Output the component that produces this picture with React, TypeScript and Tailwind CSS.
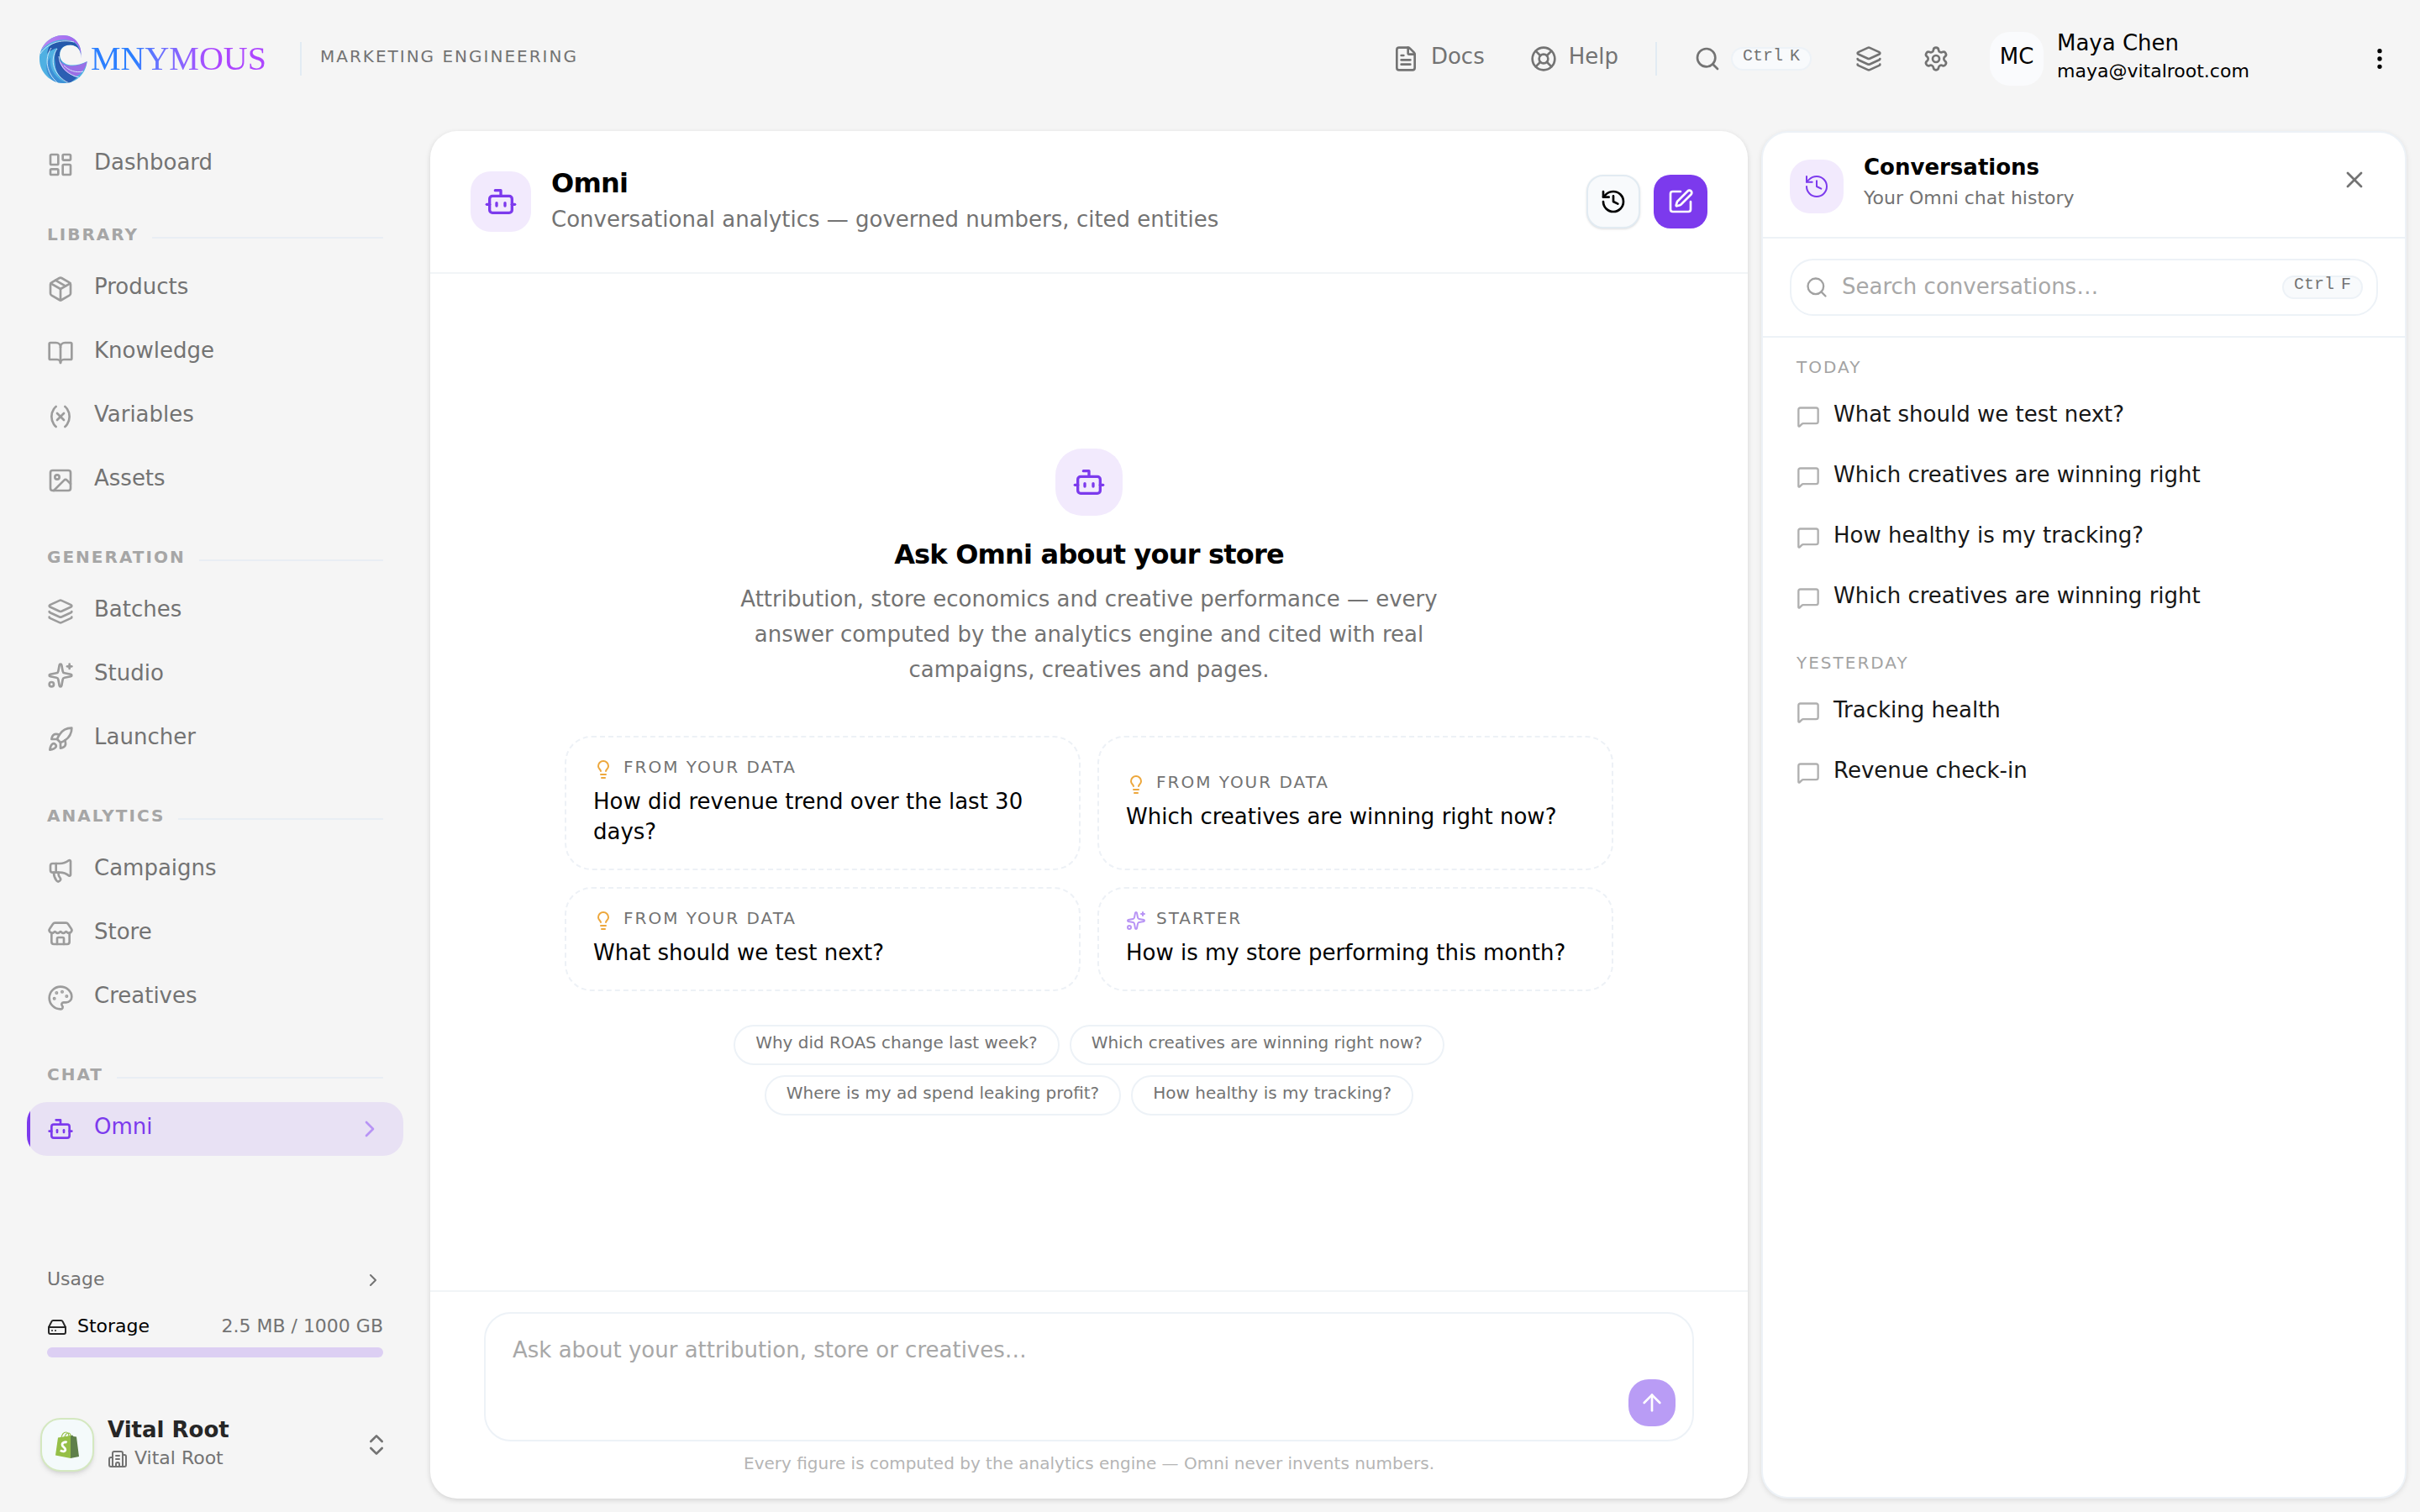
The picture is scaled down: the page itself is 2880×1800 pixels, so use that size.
import type { ReactNode } from 'react';
import {
  ArrowUp,
  BookOpen,
  Bot,
  Building2,
  ChevronRight,
  ChevronsUpDown,
  EllipsisVertical,
  FileText,
  HardDrive,
  History,
  Image,
  Layers,
  LayoutDashboard,
  LifeBuoy,
  Lightbulb,
  Megaphone,
  MessageSquare,
  Package,
  Palette,
  Rocket,
  Search,
  Settings,
  Sparkles,
  SquarePen,
  Store,
  Variable,
  X,
} from 'lucide-react';
import type { LucideIcon } from 'lucide-react';
import clsx from 'clsx';

type NavItem = { label: string; icon: LucideIcon; active?: boolean };

const sections: { title: string; items: NavItem[] }[] = [
  {
    title: 'LIBRARY',
    items: [
      { label: 'Products', icon: Package },
      { label: 'Knowledge', icon: BookOpen },
      { label: 'Variables', icon: Variable },
      { label: 'Assets', icon: Image },
    ],
  },
  {
    title: 'GENERATION',
    items: [
      { label: 'Batches', icon: Layers },
      { label: 'Studio', icon: Sparkles },
      { label: 'Launcher', icon: Rocket },
    ],
  },
  {
    title: 'ANALYTICS',
    items: [
      { label: 'Campaigns', icon: Megaphone },
      { label: 'Store', icon: Store },
      { label: 'Creatives', icon: Palette },
    ],
  },
  { title: 'CHAT', items: [{ label: 'Omni', icon: Bot, active: true }] },
];

const suggestions = [
  { kind: 'data', text: 'How did revenue trend over the last 30 days?' },
  { kind: 'data', text: 'Which creatives are winning right now?' },
  { kind: 'data', text: 'What should we test next?' },
  { kind: 'starter', text: 'How is my store performing this month?' },
];

const quickAsks = [
  'Why did ROAS change last week?',
  'Which creatives are winning right now?',
  'Where is my ad spend leaking profit?',
  'How healthy is my tracking?',
];

const history = [
  {
    day: 'TODAY',
    chats: [
      'What should we test next?',
      'Which creatives are winning right',
      'How healthy is my tracking?',
      'Which creatives are winning right',
    ],
  },
  { day: 'YESTERDAY', chats: ['Tracking health', 'Revenue check-in'] },
];

function LogoMark() {
  return (
    <svg viewBox="0 0 60 60" className="size-15" aria-hidden="true">
      <defs>
        <clipPath id="wave">
          <path d="M50 29.5C51.500 20 46 14 38.500 13.500C29 13 24 20 25.500 28C28 38 42 41 57.700 33C56 48 45 59 30 59C14 59 1 46 1 30.500C1 14 14 2 29 2C42 2 53 13 50 29.500Z" />
        </clipPath>
        <linearGradient id="crest" x1="0" y1="0" x2="1" y2="0">
          <stop offset="0" stopColor="#b98af0" />
          <stop offset="1" stopColor="#9a5cf0" />
        </linearGradient>
      </defs>
      <g clipPath="url(#wave)">
        <rect width="60" height="60" fill="#4fb0e2" />
        <path d="M0 24C8 10 26 4 40 9C48 12 50 20 50 30L60 26V0H0Z" fill="url(#crest)" />
        <path d="M12 16C20 8 36 5 44 12C48 16 50 22 50 28C47 17 42 14 36 14C28 14 24 20 25 28C26 36 34 42 44 46L38 56C24 50 14 34 22 17C18 18 14 20 10 24Z" fill="#2559ab" />
        <path d="M24 31C30 40 44 41 58 33C56 40 52 48 44 51C34 48 26 42 24 31Z" fill="#9a6fe6" />
        <path d="M22 26C22 40 34 50 46 52L36 60C22 52 16 38 22 26Z" fill="#2c5fb3" />
        <path d="M14 28C12 42 20 54 34 59L22 60C8 50 6 38 14 28Z" fill="#3d8fd6" />
        <g fill="none" stroke="#d9ecfb" strokeWidth="0.9">
          <path d="M2 24C10 12 26 6 42 10" />
          <path d="M22 18C12 32 18 50 36 59" />
          <path d="M15 17C6 30 10 48 22 58" />
          <path d="M24 27C25 40 36 50 48 52" />
          <path d="M30 38C36 44 44 47 53 45" />
        </g>
      </g>
    </svg>
  );
}

function ShopBag() {
  return (
    <svg viewBox="0 0 28 32" className="h-8 w-7" aria-hidden="true">
      <path d="M3 7.500L18 5V32L0 28.500Z" fill="#95bf47" />
      <path d="M18 5L20 4.600L21.500 6L25 6.500L28 30L18 32Z" fill="#5e7f4a" />
      <path d="M6.500 9C7.500 4 10 1 12.500 1C15 1 16 4 16 7M10.500 8C11.500 4 13.500 2 15.500 2C17 2 18 4 18 6" fill="none" stroke="#95bf47" strokeWidth="1.200" />
      <path d="M13.600 13.200C12 12.300 8 12.800 8 15.900C8 18.800 11.800 19 11.800 21.800C11.800 24 8.600 24.600 5.800 22.600" fill="none" stroke="#fff" strokeWidth="2.800" />
    </svg>
  );
}

function Kbd({ letter }: { letter: string }) {
  return (
    <kbd className="flex h-7 items-start gap-2 rounded-full border-2 border-[#edf2f7] bg-slate-50 px-3 font-['Liberation_Mono',monospace] text-[20px] leading-[18px] text-neutral-500">
      <span>Ctrl</span>
      <span>{letter}</span>
    </kbd>
  );
}

function IconTile({ className, children }: { className?: string; children: ReactNode }) {
  return (
    <div className={clsx('flex shrink-0 items-center justify-center bg-[#f2eafd] text-[#7c3aed]', className)}>
      {children}
    </div>
  );
}

function NavLink({ item }: { item: NavItem }) {
  const Icon = item.icon;
  return (
    <a
      href="#"
      className={clsx(
        'relative flex h-16 items-center gap-6 overflow-hidden rounded-3xl px-6 text-[26px]',
        item.active ? 'bg-[#e8e1f4] text-[#7c3aed]' : 'text-neutral-500',
      )}
    >
      {item.active && <span className="absolute inset-y-0 left-0 w-1 bg-[#7c3aed]" />}
      <Icon size={32} className={item.active ? '' : 'text-[#9c9c9c]'} />
      <span className="flex-1 pb-1.5">{item.label}</span>
      {item.active && <ChevronRight size={32} className="text-[#b894f5]" />}
    </a>
  );
}

function TopBar() {
  return (
    <header className="flex h-35 shrink-0 items-center pr-8 pl-11.5 text-[26px] text-neutral-500">
      <div className="flex items-center gap-0.5">
        <LogoMark />
        <span className="bg-linear-to-r from-blue-500 from-25% to-purple-500 to-70% bg-clip-text font-['Liberation_Serif',serif] text-[40px] leading-12 text-transparent">
          MNYMOUS
        </span>
      </div>
      <div className="ml-10 h-10 w-0.5 bg-[#e2ebf3]" />
      <span className="ml-5.5 pb-1.5 text-[20px] tracking-widest">MARKETING ENGINEERING</span>

      <nav className="ml-auto flex items-center">
        <a href="#" className="flex items-center gap-3.5">
          <FileText size={32} />
          <span className="pb-1.5">Docs</span>
        </a>
        <a href="#" className="ml-13.5 flex items-center gap-3.5">
          <LifeBuoy size={32} />
          <span className="pb-1.5">Help</span>
        </a>
      </nav>
      <div className="ml-11 h-10 w-0.5 bg-[#e2ebf3]" />
      <button type="button" aria-label="Search" className="ml-11 flex items-center gap-3">
        <Search size={32} />
        <Kbd letter="K" />
      </button>
      <button type="button" aria-label="Batches" className="ml-9 flex size-16 items-center justify-center">
        <Layers size={32} />
      </button>
      <button type="button" aria-label="Settings" className="ml-4 flex size-16 items-center justify-center">
        <Settings size={32} />
      </button>
      <div className="ml-8 flex w-112 items-center gap-4 text-black">
        <div className="flex size-16 items-center justify-center rounded-3xl bg-[#fafbfd]">
          <span className="pb-1.5">MC</span>
        </div>
        <div className="pb-1">
          <p className="leading-8">Maya Chen</p>
          <p className="mt-0.5 text-[22px] leading-8">maya@vitalroot.com</p>
        </div>
      </div>
      <button type="button" aria-label="Account menu" className="text-black">
        <EllipsisVertical size={32} />
      </button>
    </header>
  );
}

function Sidebar() {
  return (
    <aside className="flex w-128 shrink-0 flex-col px-8 pt-6 pb-12">
      <nav>
        <NavLink item={{ label: 'Dashboard', icon: LayoutDashboard }} />
        {sections.map((section, i) => (
          <section key={section.title} className={i === 0 ? 'mt-9' : 'mt-11'}>
            <div className="mb-2.5 flex h-9.5 items-center gap-4 px-6">
              <h2 className="pb-2 text-[20px] font-bold tracking-widest text-[#a6a6a6]">{section.title}</h2>
              <div className="h-0.5 flex-1 bg-[#e9eef4]" />
            </div>
            <div className="flex flex-col gap-3">
              {section.items.map((item) => (
                <NavLink key={item.label} item={item} />
              ))}
            </div>
          </section>
        ))}
      </nav>

      <div className="mt-auto px-6 text-[22px] leading-7 text-neutral-500">
        <a href="#" className="flex h-8 items-center justify-between">
          <span className="pb-0.5">Usage</span>
          <ChevronRight size={24} />
        </a>
        <div className="mt-6 flex h-8 items-center gap-3 text-black">
          <HardDrive size={24} className="text-neutral-800" />
          <span className="flex-1 pb-0.5">Storage</span>
          <span className="pb-0.5 text-neutral-500">2.5 MB / 1000 GB</span>
        </div>
        <div className="mt-2 h-3 rounded-full bg-[#dccff3]" />
      </div>

      <button type="button" className="mt-18 flex items-center gap-4 px-4 text-left">
        <div className="flex size-16 items-center justify-center rounded-3xl border-2 border-[#d4e8c0] bg-[#f4fafb] shadow-md">
          <ShopBag />
        </div>
        <div className="flex-1">
          <p className="pb-1.5 text-[26px] leading-7 font-bold text-neutral-800">Vital Root</p>
          <p className="flex items-center gap-2 text-[22px] leading-7 text-neutral-500">
            <Building2 size={24} />
            <span className="pb-0.5">Vital Root</span>
          </p>
        </div>
        <ChevronsUpDown size={32} className="text-neutral-500" />
      </button>
    </aside>
  );
}

function ChatPanel() {
  return (
    <main className="flex min-w-0 flex-1 flex-col rounded-4xl bg-white shadow-[0_2px_6px_rgba(0,0,0,0.14)]">
      <div className="flex items-center gap-6 border-b-2 border-[#f1f5f7] px-12 py-[42px]">
        <IconTile className="size-18 rounded-3xl">
          <Bot size={40} />
        </IconTile>
        <div className="flex-1 pb-0.5">
          <h1 className="text-[32px] leading-10 font-bold tracking-tight text-black">Omni</h1>
          <p className="mt-1 text-[26px] leading-[38px] text-neutral-500">
            Conversational analytics — governed numbers, cited entities
          </p>
        </div>
        <div className="flex gap-4">
          <button
            type="button"
            aria-label="History"
            className="flex size-16 items-center justify-center rounded-[20px] border-2 border-[#e2ebf2] bg-slate-50 text-black shadow-sm"
          >
            <History size={32} />
          </button>
          <button
            type="button"
            aria-label="New conversation"
            className="flex size-16 items-center justify-center rounded-[20px] bg-[#7c3aed] text-white"
          >
            <SquarePen size={32} />
          </button>
        </div>
      </div>

      <div className="flex flex-1 flex-col items-center justify-center px-40">
        <IconTile className="size-20 rounded-4xl">
          <Bot size={40} />
        </IconTile>
        <h2 className="mt-6.5 text-[32px] leading-10 font-bold tracking-tight text-black">Ask Omni about your store</h2>
        <p className="mt-3 max-w-4xl text-center text-[26px] leading-[42px] text-neutral-500">
          Attribution, store economics and creative performance — every answer computed by the analytics engine and
          cited with real campaigns, creatives and pages.
        </p>

        <div className="mt-[58px] grid w-full grid-cols-2 gap-5">
          {suggestions.map((s) => (
            <button
              key={s.text}
              type="button"
              className="flex flex-col justify-center rounded-4xl border-2 border-dashed border-[#edf1f6] px-8 py-6.5 text-left"
            >
              <span className="flex h-6 items-center gap-3 text-[20px] tracking-widest text-neutral-500">
                {s.kind === 'data' ? (
                  <Lightbulb size={24} className="text-[#eda73c]" />
                ) : (
                  <Sparkles size={24} className="text-[#b894f5]" />
                )}
                <span className="pb-1.5">{s.kind === 'data' ? 'FROM YOUR DATA' : 'STARTER'}</span>
              </span>
              <span className="mt-2 text-[26px] leading-9 text-black">{s.text}</span>
            </button>
          ))}
        </div>

        <div className="mt-10 flex flex-wrap justify-center gap-3">
          {quickAsks.map((q) => (
            <button
              key={q}
              type="button"
              className="flex h-12 items-center rounded-full border-2 border-[#edf2f7] px-6 text-[20px] text-neutral-500"
            >
              <span className="pb-1.5">{q}</span>
            </button>
          ))}
        </div>
      </div>

      <form className="border-t-2 border-[#f1f5f7] px-16 pt-6 pb-6">
        <div className="flex items-end rounded-4xl border-2 border-[#edf2f7] pr-5 pb-4 pl-8">
          <textarea
            aria-label="Message Omni"
            placeholder="Ask about your attribution, store or creatives…"
            className="h-33.5 flex-1 resize-none pt-6 text-[26px] leading-[38px] text-black outline-none placeholder:text-[#a8a8a8]"
          />
          <button
            type="submit"
            aria-label="Send"
            className="flex size-14 items-center justify-center rounded-3xl bg-[#b99cf5] text-white"
          >
            <ArrowUp size={32} />
          </button>
        </div>
        <p className="mt-3 pb-1 text-center text-[20px] leading-7 text-[#b5b5b5]">
          Every figure is computed by the analytics engine — Omni never invents numbers.
        </p>
      </form>
    </main>
  );
}

function ConversationsPanel() {
  return (
    <aside className="flex w-3xl shrink-0 flex-col rounded-4xl border-2 border-[#edf2f7] bg-white shadow-[0_2px_6px_rgba(0,0,0,0.1)]">
      <div className="flex items-start border-b-2 border-[#edf2f7] px-8 pt-6 pb-6.5">
        <IconTile className="mt-2 size-16 rounded-3xl">
          <History size={32} strokeWidth={1.5} />
        </IconTile>
        <div className="ml-6 flex-1">
          <h2 className="text-[26px] leading-[34px] font-bold text-black">Conversations</h2>
          <p className="text-[22px] leading-10 text-neutral-500">Your Omni chat history</p>
        </div>
        <button type="button" aria-label="Close" className="mt-4 mr-3 text-neutral-500">
          <X size={32} />
        </button>
      </div>

      <div className="border-b-2 border-[#edf2f7] px-8 py-6">
        <label className="flex h-17 items-center rounded-[28px] border-2 border-[#edf2f7] px-4">
          <Search size={28} className="text-neutral-400" />
          <input
            type="text"
            aria-label="Search conversations"
            placeholder="Search conversations…"
            className="ml-4 min-w-0 flex-1 pb-0.5 text-[26px] text-black outline-none placeholder:text-[#a8a8a8]"
          />
          <Kbd letter="F" />
        </label>
      </div>

      <div className="flex flex-col gap-6 px-10 pt-4.5">
        {history.map((group) => (
          <section key={group.day}>
            <h3 className="flex h-10 items-center pb-1.5 text-[20px] tracking-widest text-[#a3a3a3]">{group.day}</h3>
            {group.chats.map((chat, i) => (
              <a key={i} href="#" className="flex h-18 items-center gap-4 text-[26px] text-neutral-900">
                <MessageSquare size={28} className="text-[#b0b0b0]" />
                <span className="pb-1.5">{chat}</span>
              </a>
            ))}
          </section>
        ))}
      </div>
    </aside>
  );
}

export default function App() {
  return (
    <div className="flex h-screen flex-col bg-[#f5f5f5] font-['DejaVu_Sans',sans-serif]">
      <TopBar />
      <div className="flex min-h-0 flex-1">
        <Sidebar />
        <div className="flex min-w-0 flex-1 gap-4 pt-4 pr-4 pb-4">
          <ChatPanel />
          <ConversationsPanel />
        </div>
      </div>
    </div>
  );
}
